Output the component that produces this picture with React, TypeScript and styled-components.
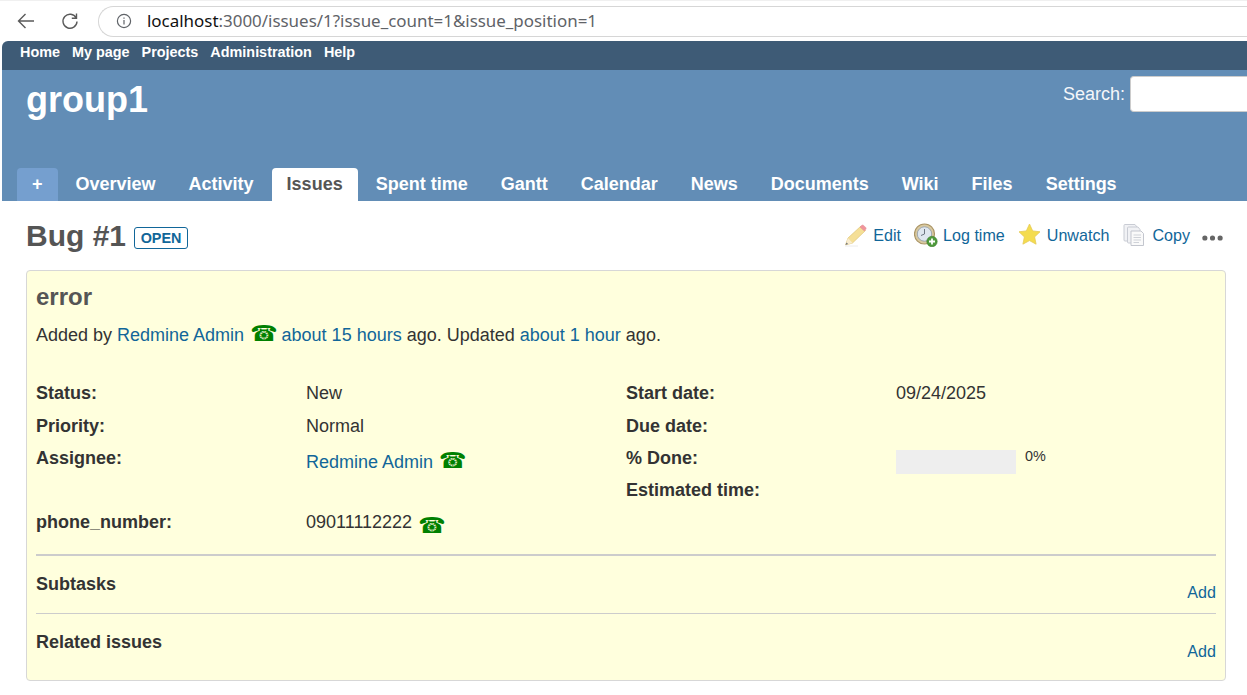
import React from "react";
import styled, { createGlobalStyle } from "styled-components";

const Global = createGlobalStyle`
  html, body { margin: 0; padding: 0; background: #fff; }
  body { width: 1247px; height: 695px; overflow: hidden; font-family: "Liberation Sans", Arial, sans-serif; color: #333; }
  a { color: #169; text-decoration: none; }
`;

const Chrome = styled.div`
  height: 41px; box-sizing: border-box; background: #fff; display: flex; align-items: center;
  padding: 0 0 1px 16px; border-top: 1px solid #f0f0f0;
`;
const NavIcon = styled.svg`
  width: 20px; height: 20px; flex: none; margin-right: ${(p: { $gap: number }) => p.$gap}px;
  fill: none; stroke: #5a5a5a; stroke-width: 1.4;
`;
const AddressBar = styled.div`
  flex: 1; height: 31px; box-sizing: border-box; margin-top: 1px; border: 1px solid #d6d6d6; border-right: none;
  border-radius: 16px 0 0 16px; display: flex; align-items: center; padding: 0 0 2px 17px;
  font-family: "Noto Sans", sans-serif; font-size: 16.93px; color: #5f6368;
`;
const InfoIcon = styled.svg`
  width: 16px; height: 16px; margin: 2px 15px 0 0; fill: none; stroke: #5f6368; stroke-width: 1.2; flex: none;
`;
const Host = styled.span` color: #111; `;

const Page = styled.div`
  margin-left: 2px; height: 654px; display: flex; flex-direction: column; overflow: hidden;
  border-top-left-radius: 6px;
`;
const Frame = styled.div`
  flex: 1; display: flex; flex-direction: column;
`;
const TopMenu = styled.nav`
  height: 29px; background: #3e5b76; display: flex; gap: 12px; padding-left: 18px; align-items: center;
  box-sizing: border-box; padding-bottom: 7px;
  font-size: 14.4px; font-weight: bold; color: #fff; flex: none;
`;
const Header = styled.header`
  height: 131px; background: #628db6; color: #fff; display: flex; flex-direction: column; flex: none;
  box-sizing: border-box;
`;
const HeadRow = styled.div`
  height: 98px; display: flex; justify-content: space-between; flex: none;
`;
const Title = styled.h1`
  margin: 9px 0 0 24px; font-size: 36px; line-height: 42px; font-weight: bold;
`;
const Search = styled.div`
  display: flex; align-items: flex-start; margin-top: 6px; font-size: 18px; color: #f5f7fa;
`;
const SearchLabel = styled.label` line-height: 36px; margin-right: 5px; `;
const SearchInput = styled.div`
  width: 117px; height: 36px; box-sizing: border-box; background: #fff; border: 1px solid #ccc; border-right: none;
  border-radius: 4px 0 0 4px;
`;
const Tabs = styled.div`
  display: flex; align-items: flex-end; height: 33px; padding-left: 15px;
`;
const Tab = styled.a<{ $active?: boolean; $plus?: boolean }>`
  height: 33px; line-height: 32px; box-sizing: border-box; font-size: 18px; font-weight: bold;
  padding: 0 15px; margin-right: 3px;
  border-radius: 4px 4px 0 0; color: ${(p) => (p.$active ? "#555" : "#fff")};
  background: ${(p) => (p.$active ? "#fff" : p.$plus ? "#759fcf" : "transparent")};
`;
const Content = styled.main`
  flex: 1; padding: 0 21px 0 24px;
`;
const IssueHead = styled.div`
  height: 69px; display: flex; justify-content: space-between; align-items: flex-start;
`;
const H2 = styled.div`
  display: flex; align-items: center; margin-top: 18px;
`;
const BugTitle = styled.h2`
  margin: 0; font-size: 30px; line-height: 34px; font-weight: bold; color: #555;
`;
const Badge = styled.span`
  margin-left: 8px; margin-top: 3px; height: 22px; width: 54px; box-sizing: border-box; border: 1px solid #169; border-radius: 3px;
  color: #169; font-size: 14.4px; font-weight: bold; display: flex; align-items: center; justify-content: center;
`;
const Actions = styled.div`
  display: flex; align-items: center; margin-top: 22px; font-size: 16.1px; margin-right: 3px;
`;
const Action = styled.a<{ $mr?: number }>`
  display: flex; align-items: center; margin-right: ${(p) => p.$mr ?? 13}px; line-height: 24px;
  svg { width: 24px; height: 24px; margin-right: 5px; flex: none; }
`;
const Dots = styled.svg` width: 21px; height: 6px; margin-top: 5px; flex: none; `;
const IssueBox = styled.section`
  height: 411px; box-sizing: border-box; background: #ffd; border: 1px solid #d7d7d7; border-radius: 4px;
  padding: 13px 9px 0 9px;
`;
const Subject = styled.h3`
  margin: 0; font-size: 24px; line-height: 26px; font-weight: bold; color: #555;
`;
const Author = styled.p`
  margin: 12px 0 0; font-size: 18px; line-height: 26px; height: 26px; white-space: pre;
`;
const Phone = styled.span<{ $dy: number }>`
  color: green; font-family: "DejaVu Sans", sans-serif; font-size: 22px; line-height: 26px; height: 26px;
  display: inline-block; vertical-align: top; position: relative; top: ${(p) => p.$dy}px; left: 1px;
`;
const Attrs = styled.div`
  margin-top: 32px; display: grid; grid-template-columns: 270px 320px 270px 1fr;
  font-size: 18px; line-height: 26px;
`;
const Label = styled.div<{ $h?: number }>` font-weight: bold; height: ${(p) => p.$h ?? 32}px; `;
const Value = styled.div` white-space: pre; `;
const LinkValue = styled(Value)` padding-top: 4px; `;
const ProgressCell = styled.div` display: flex; `;
const Bar = styled.div`
  width: 120px; height: 24px; background: #eee; margin-top: 5px;
`;
const Pct = styled.span` font-size: 14.4px; line-height: 20px; margin: 1px 0 0 9px; `;
const Sep = styled.hr<{ $thick?: boolean }>`
  margin: 0; border: none; height: ${(p) => (p.$thick ? 2 : 1)}px; background: #ccc;
`;
const SectionRow = styled.div`
  height: 57px; display: flex; justify-content: space-between; box-sizing: border-box;
`;
const SectionTitle = styled.div` font-size: 18px; font-weight: bold; line-height: 26px; margin-top: 15px; `;
const AddLink = styled.a<{ $top: number }>` font-size: 16.1px; line-height: 20px; align-self: flex-start; margin-top: ${(p) => p.$top}px; `;

const Pencil = () => (
  <svg viewBox="0 0 24 24">
    <path d="M1.5 22 L4 15 L17 3 L21.5 7.5 L8.5 20 Z" fill="#f5df96" stroke="#e0c578" strokeWidth="0.7" />
    <path d="M16 4 L17.5 2.5 Q18.5 1.6 19.6 2.4 L21.8 4.6 Q22.6 5.6 21.6 6.6 L20.4 8 Z" fill="#f0959c" stroke="#e08a92" strokeWidth="0.5" />
    <path d="M1.5 22 L4 15 L8.5 20 Z" fill="#f8ecd0" />
    <path d="M1.5 22 L2.4 19.5 L4.2 21 Z" fill="#777" />
    <path d="M1 23 H14" stroke="#ececec" strokeWidth="1" />
  </svg>
);
const Clock = () => (
  <svg viewBox="0 0 24 24">
    <circle cx="10.5" cy="11" r="10" fill="#d9c9a0" stroke="#ab9565" strokeWidth="1.2" />
    <circle cx="10.5" cy="11" r="7.2" fill="#dfe6ee" stroke="#8d9bab" strokeWidth="0.8" />
    <path d="M10.5 6 V11 L7 12.5" fill="none" stroke="#6c7580" strokeWidth="1" />
    <circle cx="18" cy="18.5" r="5.2" fill="#4f9a3c" stroke="#3f7f30" strokeWidth="0.6" />
    <path d="M18 15.5 V21.5 M15 18.5 H21" stroke="#fff" strokeWidth="1.8" />
  </svg>
);
const Star = () => (
  <svg viewBox="0 0 24 24">
    <path d="M11.5 1 L14.7 7.9 L22 8.8 L16.6 13.9 L18.1 21.2 L11.5 17.6 L4.9 21.2 L6.4 13.9 L1 8.8 L8.3 7.9 Z" fill="#f4dc4f" stroke="#e6ca55" strokeWidth="0.8" />
  </svg>
);
const Copy = () => (
  <svg viewBox="0 0 24 24">
    <path d="M1 2.5 Q1 1.5 2 1.5 H12 L14 4 V18 H2 Q1 18 1 17 Z" fill="#f1f2f5" stroke="#c9ccd4" strokeWidth="1" />
    <path d="M4.5 5 Q4.5 4 5.5 4 H15 L17 6.5 V20 H5.5 Q4.5 20 4.5 19 Z" fill="#f1f2f5" stroke="#c9ccd4" strokeWidth="1" />
    <path d="M8 8 H18 L20.5 10.5 V22.5 H8 Z" fill="#fafafa" stroke="#c3c6ce" strokeWidth="1" />
    <path d="M10.5 12 H18 M10.5 14.5 H18 M10.5 17 H18 M10.5 19.5 H16" stroke="#cfd2d8" strokeWidth="1" />
  </svg>
);

const tabs = ["Overview", "Activity", "Issues", "Spent time", "Gantt", "Calendar", "News", "Documents", "Wiki", "Files", "Settings"];
const menu = ["Home", "My page", "Projects", "Administration", "Help"];

export default function App() {
  return (
    <>
      <Global />
      <Chrome>
        <NavIcon $gap={24} viewBox="0 0 20 20"><path d="M18 10 H2.5 M9.5 3 L2.5 10 L9.5 17" /></NavIcon>
        <NavIcon $gap={18} viewBox="0 0 20 20"><path d="M16.2 7 A7 7 0 1 0 17 10.5 M16.5 2.5 V7.2 H11.8" /></NavIcon>
        <AddressBar>
          <InfoIcon viewBox="0 0 16 16">
            <circle cx="8" cy="8" r="6.6" />
            <path d="M8 7 V11.5 M8 4.4 V5.8" />
          </InfoIcon>
          <span><Host>localhost</Host>:3000/issues/1?issue_count=1&amp;issue_position=1</span>
        </AddressBar>
      </Chrome>
      <Page>
        <Frame>
          <TopMenu>{menu.map((m) => <span key={m}>{m}</span>)}</TopMenu>
          <Header>
            <HeadRow>
              <Title>group1</Title>
              <Search>
                <SearchLabel>Search:</SearchLabel>
                <SearchInput />
              </Search>
            </HeadRow>
            <Tabs>
              <Tab $plus>+</Tab>
              {tabs.map((t) => <Tab key={t} $active={t === "Issues"}>{t}</Tab>)}
            </Tabs>
          </Header>
          <Content>
            <IssueHead>
              <H2>
                <BugTitle>Bug #1</BugTitle>
                <Badge>OPEN</Badge>
              </H2>
              <Actions>
                <Action><Pencil />Edit</Action>
                <Action><Clock />Log time</Action>
                <Action $mr={14}><Star />Unwatch</Action>
                <Action $mr={12}><Copy />Copy</Action>
                <Dots viewBox="0 0 22 6">
                  <circle cx="3" cy="3" r="2.7" fill="#666" />
                  <circle cx="11" cy="3" r="2.7" fill="#666" />
                  <circle cx="19" cy="3" r="2.7" fill="#666" />
                </Dots>
              </Actions>
            </IssueHead>
            <IssueBox>
              <Subject>error</Subject>
              <Author>
                Added by <a>Redmine Admin</a> <Phone $dy={-1}>☎</Phone> <a>about 15 hours</a> ago. Updated <a>about 1 hour</a> ago.
              </Author>
              <Attrs>
                <Label $h={33}>Status:</Label><Value>New</Value>
                <Label>Start date:</Label><Value>09/24/2025</Value>
                <Label>Priority:</Label><Value>Normal</Value>
                <Label>Due date:</Label><Value></Value>
                <Label>Assignee:</Label><LinkValue><a>Redmine Admin</a> <Phone $dy={-1}>☎</Phone></LinkValue>
                <Label>% Done:</Label><ProgressCell><Bar /><Pct>0%</Pct></ProgressCell>
                <Label></Label><Value></Value>
                <Label>Estimated time:</Label><Value></Value>
                <Label $h={45}>phone_number:</Label><Value>09011112222 <Phone $dy={4}>☎</Phone></Value>
                <Label $h={45}></Label><Value></Value>
              </Attrs>
              <Sep $thick />
              <SectionRow>
                <SectionTitle>Subtasks</SectionTitle>
                <AddLink $top={26}>Add</AddLink>
              </SectionRow>
              <Sep />
              <SectionRow>
                <SectionTitle>Related issues</SectionTitle>
                <AddLink $top={27}>Add</AddLink>
              </SectionRow>
            </IssueBox>
          </Content>
        </Frame>
      </Page>
    </>
  );
}
